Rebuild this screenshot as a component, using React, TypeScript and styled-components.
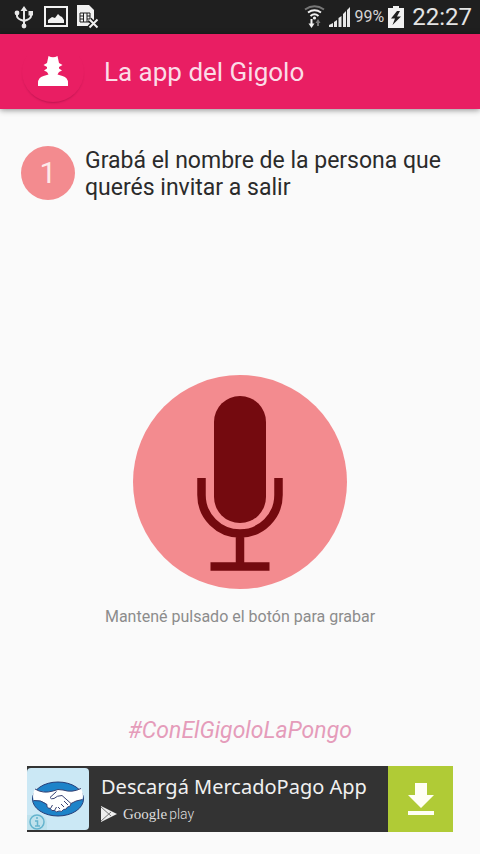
import React from "react";
import styled, { createGlobalStyle } from "styled-components";

const GlobalStyle = createGlobalStyle`
  *, *::before, *::after { box-sizing: border-box; }
  body {
    margin: 0;
    background: #fafafa;
    font-family: Roboto, "Noto Sans", sans-serif;
  }
`;

const Screen = styled.div`
  display: flex;
  flex-direction: column;
  min-height: 100vh;
  padding-bottom: 22px;
`;

const StatusBar = styled.div`
  display: flex;
  align-items: center;
  justify-content: space-between;
  height: 34px;
  padding: 0 8px 0 13px;
  background: #1f1f1f;
  color: #f2f2f2;
`;

const StatusGroup = styled.div<{ $gap: number }>`
  display: flex;
  align-items: center;
  gap: ${({ $gap }) => $gap}px;
`;

const Percent = styled.span`
  font-size: 16px;
  line-height: 34px;
  color: #d4d4d4;
`;

const Clock = styled.time`
  margin-left: 4px;
  font-size: 24px;
  line-height: 34px;
  color: #e4e4e4;
`;

const AppBar = styled.header`
  display: flex;
  align-items: center;
  gap: 20px;
  height: 75px;
  padding: 0 22px;
  background: #e91e63;
  box-shadow: 0 1px 6px rgba(0, 0, 0, 0.45);
`;

const Avatar = styled.div`
  display: flex;
  align-items: center;
  justify-content: center;
  width: 62px;
  height: 60px;
  border-radius: 50%;
  box-shadow: 0 2px 2px -1px rgba(110, 0, 45, 0.35);
`;

const Title = styled.h1`
  margin: 0;
  font-size: 26px;
  font-weight: 400;
  line-height: 32px;
  color: #fbdce7;
`;

const Main = styled.main`
  display: flex;
  flex: 1;
  flex-direction: column;
  align-items: center;
`;

const Step = styled.section`
  display: flex;
  align-items: center;
  gap: 10px;
  width: 100%;
  padding: 36px 21px 0;
`;

const StepNumber = styled.span`
  display: flex;
  flex: none;
  align-items: center;
  justify-content: center;
  width: 54px;
  height: 54px;
  border-radius: 50%;
  background: #f38b8f;
  color: #fde9ea;
  font-size: 30px;
  line-height: 54px;
`;

const StepText = styled.p`
  margin: 0;
  padding-top: 2px;
  font-size: 23px;
  line-height: 27px;
  color: #2b2b2b;
`;

const Recorder = styled.section`
  display: flex;
  flex: 1;
  flex-direction: column;
  align-items: center;
  justify-content: center;
  gap: 16px;
  padding-top: 87px;
`;

const RecordButton = styled.button`
  display: block;
  width: 214px;
  height: 214px;
  padding: 0;
  border: 0;
  border-radius: 50%;
  background: #f38b8f;
  color: #740a0f;
  cursor: pointer;
`;

const Hint = styled.p`
  margin: 0;
  font-size: 16px;
  line-height: 24px;
  color: #8c8c8c;
`;

const Hashtag = styled.p`
  margin: 0 0 19px;
  font-size: 23px;
  font-style: italic;
  line-height: 32px;
  color: #e59cba;
`;

const Ad = styled.a`
  display: flex;
  align-items: stretch;
  align-self: stretch;
  height: 66px;
  margin: 0 27px;
  background: #333333;
  color: #f0f0f0;
  text-decoration: none;
`;

const AdLogo = styled.span`
  display: flex;
  flex: none;
  align-items: center;
  width: 62px;
`;

const AdBody = styled.span`
  display: flex;
  flex: 1;
  flex-direction: column;
  padding: 6px 0 0 12px;
  font-family: "Noto Sans", sans-serif;
  white-space: nowrap;
`;

const AdTitle = styled.span`
  font-size: 20px;
  line-height: 30px;
`;

const Store = styled.span`
  display: flex;
  align-items: center;
  gap: 6px;
  line-height: 22px;
  color: #dddddd;
`;

const StoreName = styled.span`
  font-family: "Liberation Serif", serif;
  font-size: 15px;
`;

const StorePlay = styled.span`
  margin-left: 2px;
  font-family: Roboto, sans-serif;
  font-size: 14px;
  font-weight: 300;
`;

const Download = styled.span`
  display: flex;
  flex: none;
  align-items: center;
  justify-content: center;
  width: 65px;
  background: #b0cb36;
`;

const Icon = styled.svg`
  display: block;
  flex: none;
`;

const UsbIcon = () => (
  <Icon width="22" height="24" viewBox="0 0 22 24" fill="none" stroke="#e8e8e8" strokeWidth="2">
    <path d="M11 4v17M4 8v3q0 3 7 5M18 8v3q0 3-7 5" />
    <path d="M11 1l3.500 5h-7zM15.500 6h4.500v4.500h-4.500z" fill="#e8e8e8" stroke="none" />
    <circle cx="4" cy="8" r="2.400" fill="#e8e8e8" stroke="none" />
    <circle cx="11" cy="21" r="2.400" fill="#e8e8e8" stroke="none" />
  </Icon>
);

const ImageIcon = () => (
  <Icon width="24" height="22" viewBox="0 0 24 22">
    <path d="M1 1h22v19H1z" fill="none" stroke="#f2f2f2" strokeWidth="2" />
    <path d="M4 17v-3l4-3 3 1 3-4 2 2 2 1 2 3v3z" fill="#f2f2f2" />
  </Icon>
);

const SimIcon = () => (
  <Icon width="22" height="24" viewBox="0 0 22 24">
    <path d="M0 0h12l5 5v16H0z" fill="#f2f2f2" />
    <path d="M3 8h10v9H3zM6.500 8v9M10 8v9M3 11h3.500M10 14h3M3 14h3.500M10 11h3" fill="none" stroke="#1f1f1f" strokeWidth="1" />
    <path d="M12.500 14.500l8 8M20.500 14.500l-8 8" stroke="#1f1f1f" strokeWidth="5" />
    <path d="M12.500 14.500l8 8M20.500 14.500l-8 8" stroke="#f2f2f2" strokeWidth="2" />
  </Icon>
);

const WifiIcon = () => (
  <Icon width="21" height="24" viewBox="0 0 21 24" fill="none" strokeWidth="2">
    <path d="M1 4.500q9.500-6.500 19 0" stroke="#777777" />
    <path d="M4 7.500q6.500-4.500 13 0M6.500 11q4-3.500 8 0" stroke="#f2f2f2" />
    <circle cx="10.500" cy="13" r="1.600" fill="#f2f2f2" />
    <path d="M7.500 14v5" stroke="#f2f2f2" />
    <path d="M4.500 18.500h6l-3 4.500z" fill="#f2f2f2" />
    <path d="M14 21v-4" stroke="#777777" />
    <path d="M11.500 18h5L14 14z" fill="#777777" />
  </Icon>
);

const SignalIcon = () => (
  <Icon width="22" height="22" viewBox="0 0 22 22" fill="#e8e8e8">
    <path d="M0 21v-2l4-2v4zM5 21v-5l3-2v7zM9.500 21V12l3-2v11zM14 21V8l3-3v16zM18 21V4l3-3v20z" />
  </Icon>
);

const BatteryIcon = () => (
  <Icon width="16" height="23" viewBox="0 0 16 23">
    <path d="M0 2h5V0h6v2h5v20H0z" fill="#f2f2f2" />
    <path d="M9 5L3 12.500h4L4.500 19 13 10.500H9L12 5z" fill="#1f1f1f" />
  </Icon>
);

const SpyIcon = () => (
  <Icon width="32" height="32" viewBox="0 0 32 32" fill="#ffffff">
    <path d="M11.500 0q4.500 2.500 9 0l1.500 7 3.500 2-3.500 2v1.500l3 2-3 1.500-1.500 2.500 5 1.500q5.500 1.500 5.500 7v3H1v-3q0-5.500 5.500-7l5-1.500L10 16l-3-1.500 3-2V11L6.500 9 10 7z" />
  </Icon>
);

const MicrophoneIcon = () => (
  <Icon width="214" height="214" viewBox="0 0 214 214" aria-hidden="true">
    <rect x="81" y="21" width="52" height="127" rx="26" fill="currentColor" />
    <path d="M68.500 103v17a38.500 38.500 0 0 0 77 0v-17M107 158v34M77.500 191.500h59" fill="none" stroke="currentColor" strokeWidth="8.500" />
  </Icon>
);

const HandshakeIcon = () => (
  <Icon width="62" height="62" viewBox="0 0 62 62">
    <rect width="62" height="62" rx="4" fill="#cbe8f5" />
    <path d="M0 47h12a8 8 0 0 1 8 8v7H0z" fill="#bfe2ed" />
    <ellipse cx="31" cy="31" rx="25.500" ry="17" fill="#1d83c9" stroke="#263e78" />
    <path
      d="M8 21q8 5 18 2 5-2.500 10-1 9 3 18-1.500 3 6 1.500 11-7 1-11.500 4 0 3.500-3.500 3.500-1 3-4 2.500-1.500 3-4.500 1.500-2.500 2-4.500-.5-3.500 1-4-2-4.500-.5-3.500-4-6-5-13.500-4Q5 26 8 21z"
      fill="#ffffff"
    />
    <path
      d="M8 21q8 5 18 2M26 23q5-2.500 10-1 9 3 18-1.500M6.500 32.500q7.500-1 13.500 4M55.500 31.500q-7 1-11.500 4M20 36.500q-1 3.500 3.500 4 .5 3 4 2 2 2.500 4.500.5 3 1.500 4.500-1.500 3 .5 4-2.500 3.500 0 3.500-3.500L35 27.500q-5 0-8 3-3 1-4-1l6.500-6"
      fill="none"
      stroke="#374273"
      strokeWidth="1"
    />
    <path
      d="M23.500 40.500l2-3.500M27.500 42.500l2-3.500M37 39l-3-3M41 37l-4-4M33 41l-2-2"
      fill="none"
      stroke="#374273"
      strokeWidth="1"
    />
    <circle cx="10" cy="54" r="7" fill="none" stroke="#65b4ce" strokeWidth="1.500" />
    <path d="M8 53h2.500v5M8 58h5M10 49v2" fill="none" stroke="#65b4ce" strokeWidth="1.500" />
  </Icon>
);

const PlayIcon = () => (
  <Icon width="16" height="16" viewBox="0 0 16 16">
    <path d="M0 0l16 8-16 8z" fill="#eeeeee" />
    <path d="M0 1l10 9M0 15L10 6" stroke="#777777" strokeWidth="1" />
  </Icon>
);

const DownloadIcon = () => (
  <Icon width="28" height="34" viewBox="0 0 28 34" fill="#fffff4">
    <path d="M8 1h12v12h7L14 26 1 13h7zM1 29h26v4H1z" />
  </Icon>
);

export default function App() {
  return (
    <>
      <GlobalStyle />
      <Screen>
        <StatusBar>
          <StatusGroup $gap={9}>
            <UsbIcon />
            <ImageIcon />
            <SimIcon />
          </StatusGroup>
          <StatusGroup $gap={4}>
            <WifiIcon />
            <SignalIcon />
            <Percent>99%</Percent>
            <BatteryIcon />
            <Clock>22:27</Clock>
          </StatusGroup>
        </StatusBar>
        <AppBar>
          <Avatar>
            <SpyIcon />
          </Avatar>
          <Title>La app del Gigolo</Title>
        </AppBar>
        <Main>
          <Step>
            <StepNumber>1</StepNumber>
            <StepText>Grabá el nombre de la persona que querés invitar a salir</StepText>
          </Step>
          <Recorder>
            <RecordButton type="button" aria-labelledby="record-hint">
              <MicrophoneIcon />
            </RecordButton>
            <Hint id="record-hint">Mantené pulsado el botón para grabar</Hint>
          </Recorder>
          <Hashtag>#ConElGigoloLaPongo</Hashtag>
          <Ad href="#mercadopago">
            <AdLogo>
              <HandshakeIcon />
            </AdLogo>
            <AdBody>
              <AdTitle>Descargá MercadoPago App</AdTitle>
              <Store>
                <PlayIcon />
                <span>
                  <StoreName>Google</StoreName>
                  <StorePlay>play</StorePlay>
                </span>
              </Store>
            </AdBody>
            <Download>
              <DownloadIcon />
            </Download>
          </Ad>
        </Main>
      </Screen>
    </>
  );
}
